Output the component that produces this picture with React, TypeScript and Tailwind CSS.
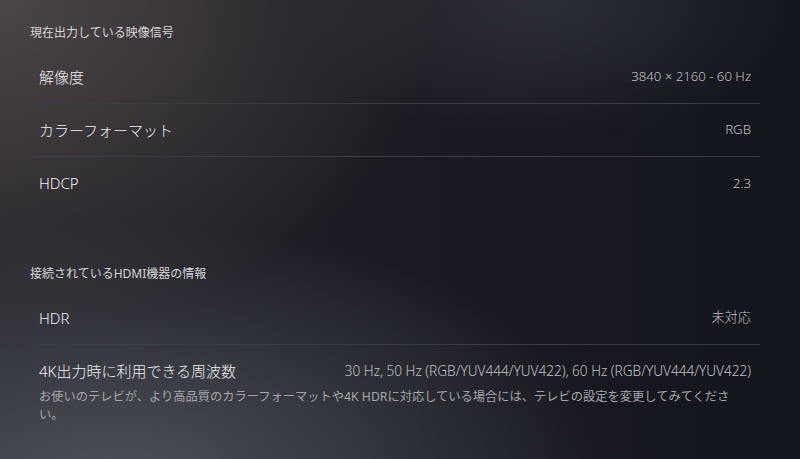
const rowsSignal = [
  { label: "解像度", value: "3840 × 2160 - 60 Hz" },
  { label: "カラーフォーマット", value: "RGB" },
  { label: "HDCP", value: "2.3" },
];

function SectionHeader({ title }: { title: string }) {
  return (
    <div className="pl-[30px] h-4 flex items-center text-[12px] leading-4 text-[#d6d6d8]">
      {title}
    </div>
  );
}

function Row({ label, value, last }: { label: string; value: string; last?: boolean }) {
  return (
    <div
      className={`h-[53px] flex items-center justify-between pl-[7px] pr-[9px] ${
        last ? "" : "border-b border-[#3a3b43]"
      }`}
    >
      <span className="text-[15px] font-light text-[#f0f0f2]">{label}</span>
      <span className="text-[13.2px] font-light text-[#c0c1c6]">{value}</span>
    </div>
  );
}

export default function App() {
  return (
    <div
      className="relative w-full h-[459px] overflow-hidden bg-[#181920] bg-[radial-gradient(ellipse_440px_330px_at_0%_0%,rgba(90,80,78,0.75),transparent),radial-gradient(ellipse_500px_260px_at_15%_105%,rgba(95,100,108,0.7),transparent),radial-gradient(ellipse_260px_140px_at_68%_0%,rgba(70,72,80,0.45),transparent),linear-gradient(90deg,#24242b_0%,#1b1c23_50%,#13151c_100%)]"
      style={{ fontFamily: '"Noto Sans", "Noto Sans CJK JP", sans-serif' }}
    >
      <div className="pt-[25px]">
        <SectionHeader title="現在出力している映像信号" />
        <div className="mt-[10px] ml-[32px] w-[728px]">
          {rowsSignal.map((r, i) => (
            <Row key={r.label} label={r.label} value={r.value} last={i === rowsSignal.length - 1} />
          ))}
        </div>

        <div className="mt-[56px]">
          <SectionHeader title="接続されているHDMI機器の情報" />
        </div>
        <div className="mt-[10px] ml-[32px] w-[728px]">
          <Row label="HDR" value="未対応" />
          <div className="pt-[15px] pl-[7px] pr-[9px]">
            <div className="flex items-center justify-between h-[22px]">
              <span className="text-[15px] font-light text-[#f0f0f2]">4K出力時に利用できる周波数</span>
              <span className="text-[13.6px] font-light text-[#c0c1c6]">
                30 Hz, 50 Hz (RGB/YUV444/YUV422), 60 Hz (RGB/YUV444/YUV422)
              </span>
            </div>
            <p className="mt-[6px] text-[12.25px] leading-[18px] text-[#a4a6ac]">
              お使いのテレビが、より高品質のカラーフォーマットや4K HDRに対応している場合には、テレビの設定を変更してみてくださ
              <br />
              い。
            </p>
          </div>
        </div>
      </div>
    </div>
  );
}
